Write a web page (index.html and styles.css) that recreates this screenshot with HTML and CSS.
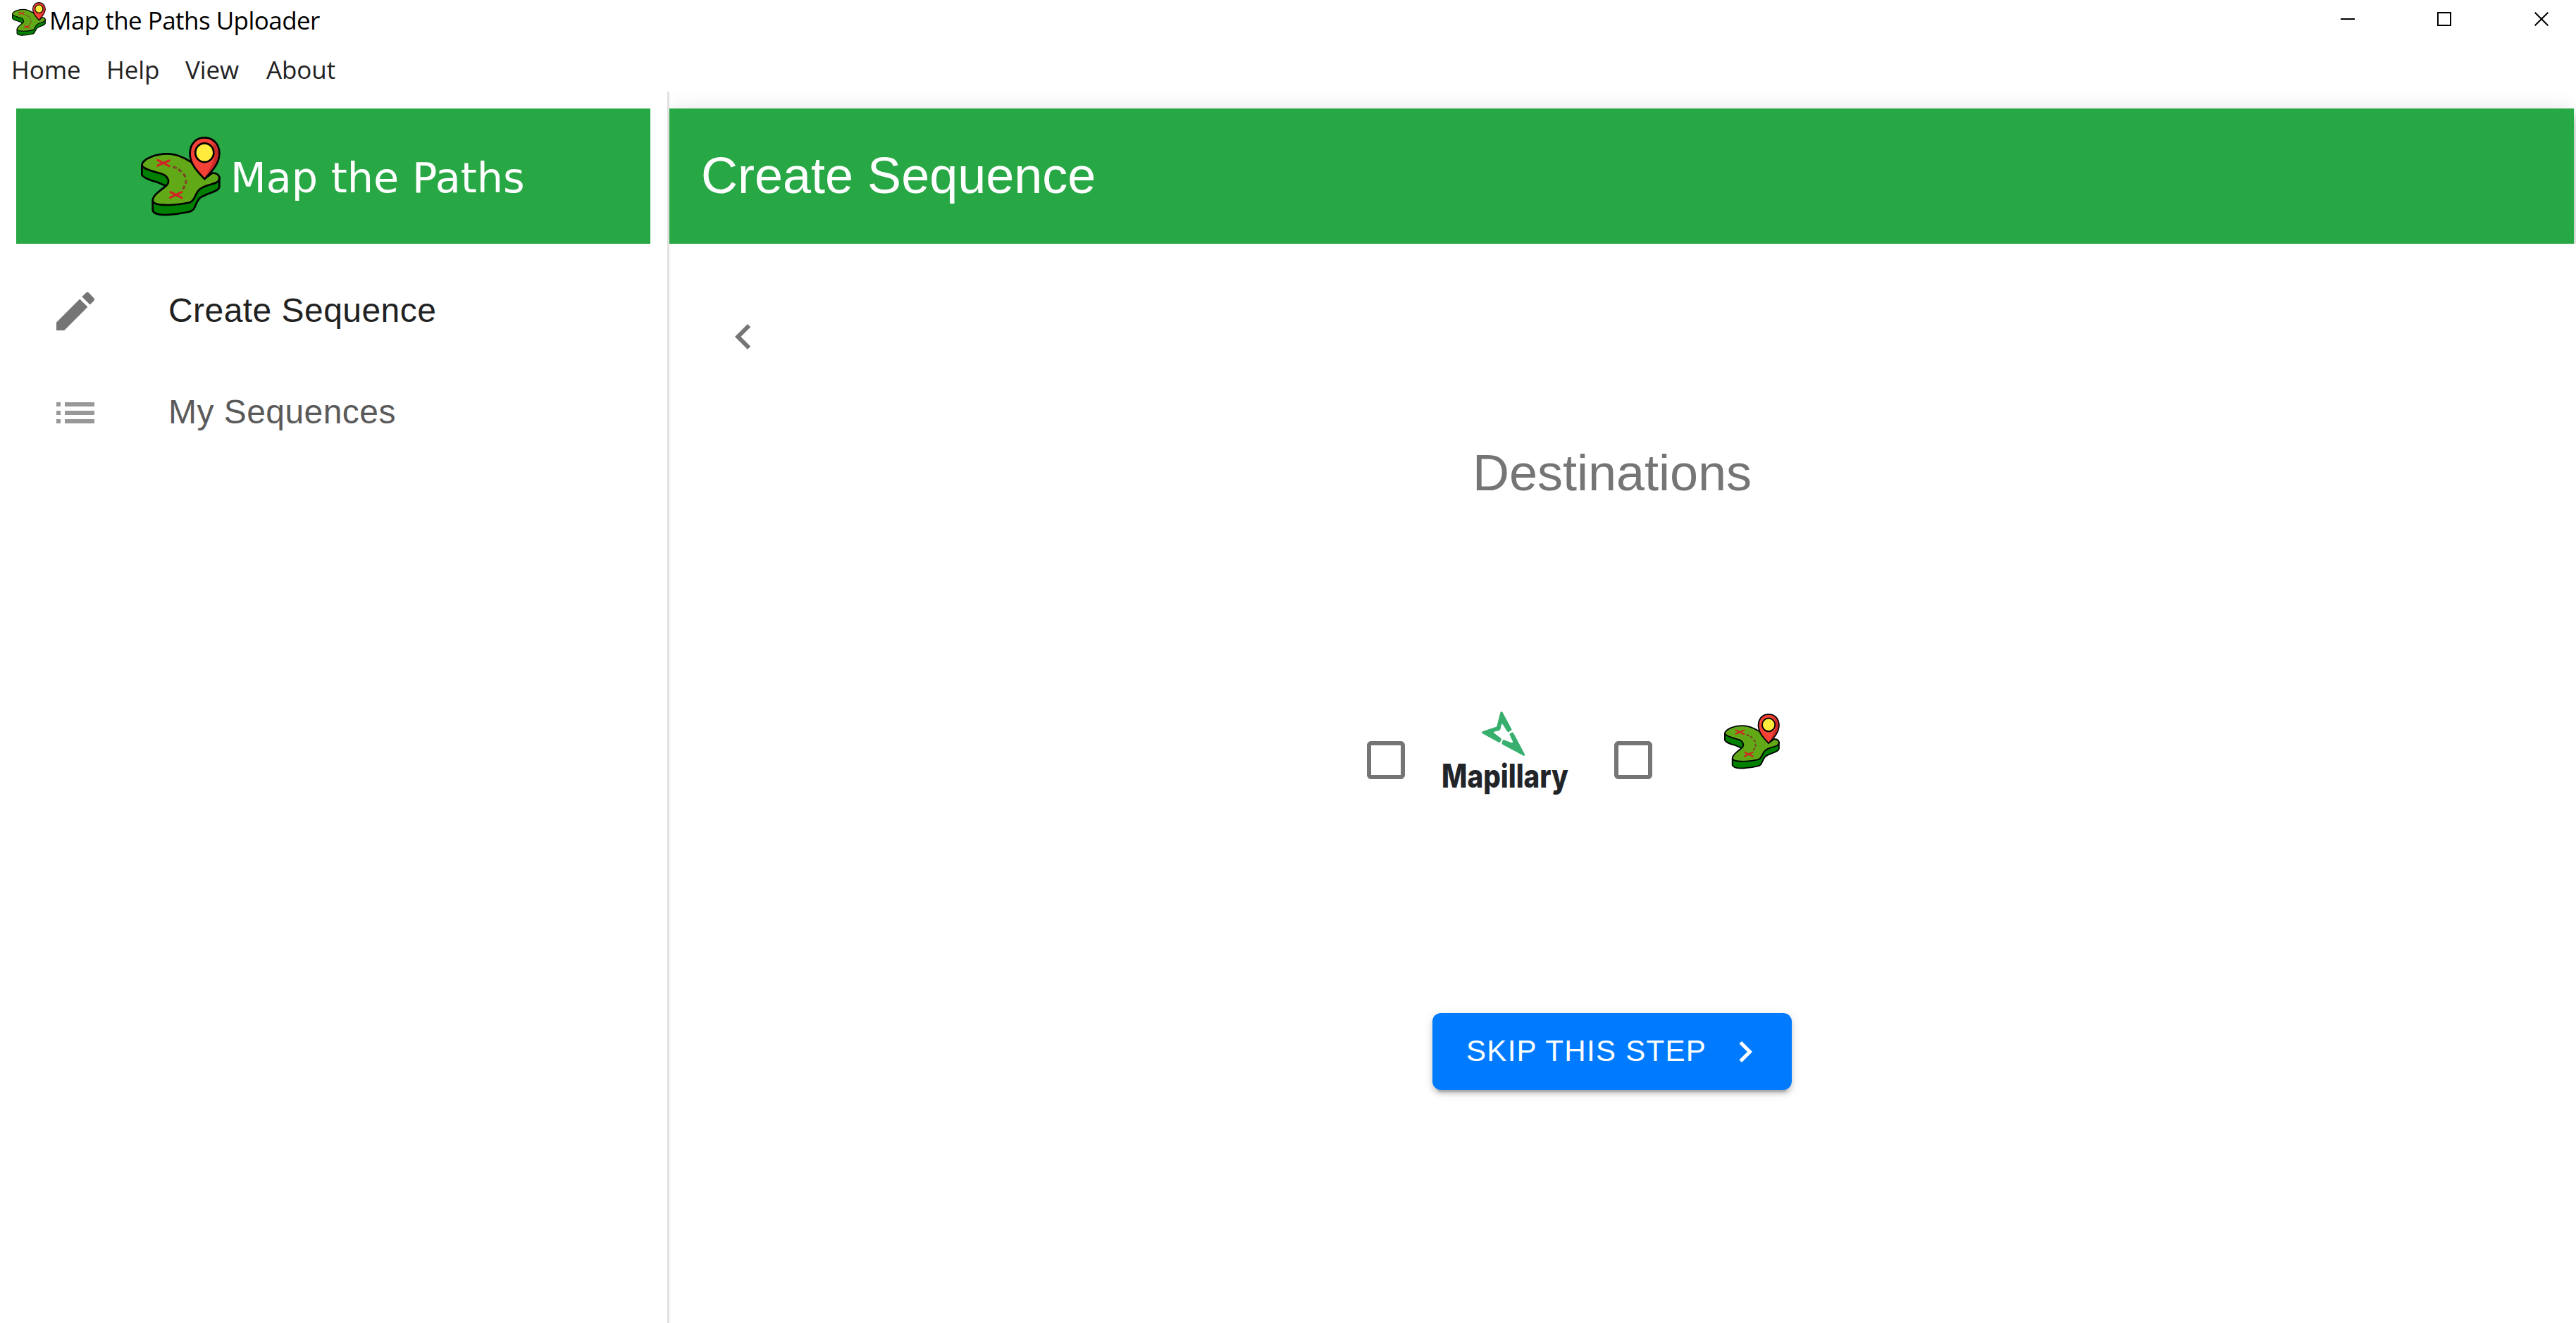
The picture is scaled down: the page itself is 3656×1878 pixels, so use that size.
FILE: index.html
```html
<!DOCTYPE html>
<html lang="en">
<head>
<meta charset="utf-8">
<title>Map the Paths Uploader</title>
<link rel="stylesheet" href="styles.css">
</head>
<body>
<svg class="defs" width="0" height="0" aria-hidden="true">
  <symbol id="trail-map" viewBox="18 17 338 338">
    <g stroke="#000" stroke-width="8" stroke-linejoin="round" stroke-linecap="round">
      <path fill="#008000" d="M22 140V178C26 190 58 203 84 209L124 226L80 268Q68 280 68 292V330Q72 347 114 349C160 349 192 342 222 336C254 330 244 300 270 276C300 256 350 250 351 230V190Z"/>
      <path fill="#62a918" d="M22 138C24 112 78 90 130 90C172 90 202 106 230 124C250 150 270 170 288 196L322 171C342 172 351 182 351 194C350 222 300 214 268 240C246 258 250 286 226 296C204 302 150 308 122 307C90 306 70 302 68 288C70 262 104 244 126 225C142 210 136 184 104 174C76 166 28 156 22 138Z"/>
      <path fill="#f44336" d="M288 21C250 21 226 50 226 88C226 132 256 164 288 197C322 162 351 130 351 88C351 50 326 21 288 21Z"/>
    </g>
    <path fill="#c62828" d="M314 34C340 54 348 74 346 96C342 132 318 156 294 182C316 144 332 118 332 84C331 62 326 48 314 34Z"/>
    <ellipse cx="288" cy="85" rx="39" ry="40" fill="#ffeb3b" stroke="#000" stroke-width="8"/>
    <path fill="none" stroke="#d32222" stroke-width="9" stroke-linecap="round" d="M90 117L138 142M138 118L89 140M144 252L192 277M191 252L142 276"/>
    <path fill="none" stroke="#7d4a26" stroke-width="10" stroke-linecap="round" d="M158 147L166 149M180 158L187 163M201 178L205 185M209 205L209 213M202 229L198 237"/>
  </symbol>
  <symbol id="checkbox" viewBox="0 0 24 24">
    <path d="M19 5v14H5V5h14m0-2H5c-1.1 0-2 .9-2 2v14c0 1.1.9 2 2 2h14c1.1 0 2-.9 2-2V5c0-1.1-.9-2-2-2z"/>
  </symbol>
</svg>

<header class="titlebar">
  <svg class="titlebar-icon"><use href="#trail-map"/></svg>
  <span class="titlebar-text">Map the Paths Uploader</span>
  <div class="window-controls">
    <svg viewBox="0 0 20 20"><path d="M1 10h20"/></svg>
    <svg viewBox="0 0 20 20"><path d="M1 1h18v18H1z"/></svg>
    <svg viewBox="0 0 20 20"><path d="M.7 .7l18.6 18.6M19.3 .7L.7 19.3"/></svg>
  </div>
</header>
<nav class="menubar">
  <span class="menu-home">Home</span>
  <span class="menu-help">Help</span>
  <span class="menu-view">View</span>
  <span class="menu-about">About</span>
</nav>

<div class="app">
  <aside class="sidebar">
    <div class="brand">
      <svg class="brand-icon"><use href="#trail-map"/></svg>
      <span class="brand-text">Map the Paths</span>
    </div>
    <ul class="nav">
      <li class="nav-item">
        <svg class="nav-icon" viewBox="0 0 24 24"><path d="M3 17.25V21h3.75L17.81 9.94l-3.75-3.75L3 17.25zM20.71 7.04c.39-.39.39-1.02 0-1.41l-2.34-2.34a.9959.9959 0 00-1.41 0l-1.83 1.83 3.75 3.75 1.83-1.83z"/></svg>
        <span class="nav-label">Create Sequence</span>
      </li>
      <li class="nav-item nav-item-muted">
        <svg class="nav-icon" viewBox="0 0 24 24"><path d="M3 13h2v-2H3v2zm0 4h2v-2H3v2zm0-8h2V7H3v2zm4 4h14v-2H7v2zm0 4h14v-2H7v2zM7 7v2h14V7H7z"/></svg>
        <span class="nav-label">My Sequences</span>
      </li>
    </ul>
  </aside>
  <main class="main">
    <h1 class="page-header">Create Sequence</h1>
    <section class="content">
      <button class="back" aria-label="Back">
        <svg viewBox="0 0 24 24"><path d="M15.41 7.41L14 6l-6 6 6 6 1.41-1.41L10.83 12z"/></svg>
      </button>
      <h2 class="step-title">Destinations</h2>
      <div class="destinations">
        <svg class="check"><use href="#checkbox"/></svg>
        <svg class="mapillary" viewBox="0 0 190 122">
          <g transform="translate(51 -5) scale(.3333)" fill="#38af6d" stroke="#38af6d" stroke-width="3" stroke-linejoin="round">
            <path d="M105 18Q108 14 111 18L150 91Q151 94 148 95L138 101Q135 102 133 99L116 71Q111 63 106 71L102 90Q101 94 96 95L78 99Q71 102 76 108L105 130Q108 133 106 136L101 145Q99 147 96 145L27 107Q23 103 27 101L85 82Q89 80 90 76Z"/>
            <path d="M118 137L149 149Q159 151 158 144L144 114Q143 111 146 109L153 105Q156 104 158 107L206 198Q207 203 202 202L112 154Q110 152 111 149L114 139Q115 136 118 137Z"/>
          </g>
          <text x="2" y="107.5" textLength="180" lengthAdjust="spacingAndGlyphs">Mapillary</text>
        </svg>
        <svg class="check"><use href="#checkbox"/></svg>
        <svg class="trail-option"><use href="#trail-map"/></svg>
      </div>
      <button class="skip">
        <span>SKIP THIS STEP</span>
        <svg viewBox="0 0 24 24"><path d="M10 6L8.59 7.41 13.17 12l-4.58 4.59L10 18l6-6z"/></svg>
      </button>
    </section>
  </main>
</div>
</body>
</html>
```
FILE: styles.css
```css
* { box-sizing: border-box; }

body {
  margin: 0;
  height: 1878px;
  display: flex;
  flex-direction: column;
  overflow: hidden;
  background: #fff;
  font-family: "Liberation Sans", Arial, sans-serif;
}

svg { display: block; flex: none; overflow: visible; }
.defs { position: absolute; }

/* Window chrome */
.titlebar {
  height: 60px;
  flex: none;
  display: flex;
  align-items: flex-start;
  padding: 3px 39px 0 17px;
  font-family: "Open Sans", sans-serif;
  color: #000;
}
.titlebar-icon { width: 48px; height: 48px; }
.titlebar-text {
  margin-left: 5px;
  font-size: 35px;
  line-height: 52px;
  letter-spacing: -0.55px;
}
.window-controls {
  margin: 14px 0 0 auto;
  display: flex;
  gap: 118px;
}
.window-controls svg {
  width: 20px;
  height: 20px;
  fill: none;
  stroke: #000;
  stroke-width: 2;
}
.menubar {
  height: 70px;
  flex: none;
  display: flex;
  padding-left: 16px;
  font-family: "Open Sans", sans-serif;
  font-size: 35px;
  line-height: 78px;
  letter-spacing: -0.1px;
  color: #222;
}
.menu-home { width: 135px; }
.menu-help { width: 112px; }
.menu-view { width: 115px; }

/* Layout */
.app { flex: 1; display: flex; min-height: 0; }
.sidebar {
  width: 950px;
  flex: none;
  padding: 24px 24px 0 23px;
  border-right: 3px solid #e0e0e0;
}
.brand {
  height: 192px;
  display: flex;
  align-items: center;
  padding-left: 177px;
  background: #28a745;
  color: #fff;
}
.brand-icon { width: 113px; height: 113px; }
.brand-text {
  margin-left: 14px;
  padding-top: 5px;
  font-family: "DejaVu Sans", sans-serif;
  font-size: 58.8px;
  line-height: 70px;
}
.nav { list-style: none; margin: 0; padding: 24px 0; }
.nav-item {
  height: 144px;
  display: flex;
  align-items: center;
  padding-left: 48px;
  font-size: 48px;
  letter-spacing: 0.45px;
  color: #212121;
}
.nav-item-muted { opacity: 0.74; }
.nav-icon { width: 72px; height: 72px; margin-right: 96px; fill: #757575; }
.nav-label { padding-bottom: 3px; }

.main {
  flex: 1;
  display: flex;
  flex-direction: column;
  padding-top: 24px;
  overflow: hidden;
}
.page-header {
  height: 192px;
  flex: none;
  margin: 0 3px 0 0;
  padding-left: 45px;
  background: #28a745;
  color: #fff;
  font-size: 72px;
  font-weight: 400;
  line-height: 191px;
  box-shadow: 0 6px 12px -3px rgba(0, 0, 0, .2), 0 12px 15px 0 rgba(0, 0, 0, .14), 0 3px 30px 0 rgba(0, 0, 0, .12);
}
.content {
  position: relative;
  flex: 1;
  display: flex;
  flex-direction: column;
  align-items: center;
  padding: 60px 30px 0 0;
  background: #fff;
}
.back {
  align-self: flex-start;
  display: flex;
  margin-left: 33px;
  padding: 36px;
  border: 0;
  background: none;
}
.back svg { width: 72px; height: 72px; fill: #757575; }
.step-title {
  margin: 73px 0 0;
  font-size: 72px;
  font-weight: 400;
  line-height: 96px;
  color: #757575;
}
.destinations {
  align-self: flex-start;
  display: flex;
  align-items: flex-start;
  margin: 291px 0 0 981px;
}
.check { width: 72px; height: 72px; margin-top: 33px; fill: #757575; }
.mapillary { width: 190px; height: 122px; margin: 0 48px 0 41px; }
.mapillary text {
  font-family: Inter, sans-serif;
  font-size: 46.5px;
  font-weight: 800;
  fill: #212429;
}
.trail-option { width: 79px; height: 79px; margin: 3px 0 0 93px; }
.skip {
  width: 510px;
  height: 109px;
  margin-top: 306px;
  padding: 0 36px 0 48px;
  display: flex;
  align-items: center;
  justify-content: space-between;
  border: 0;
  border-radius: 12px;
  background: #007bff;
  color: #fff;
  font-family: inherit;
  font-size: 42px;
  letter-spacing: 1.3px;
  white-space: nowrap;
  box-shadow: 0 9px 3px -6px rgba(0, 0, 0, .2), 0 6px 6px 0 rgba(0, 0, 0, .14), 0 3px 15px 0 rgba(0, 0, 0, .12);
}
.skip span { padding-bottom: 2px; }
.skip svg { width: 60px; height: 60px; fill: #fff; }
```
